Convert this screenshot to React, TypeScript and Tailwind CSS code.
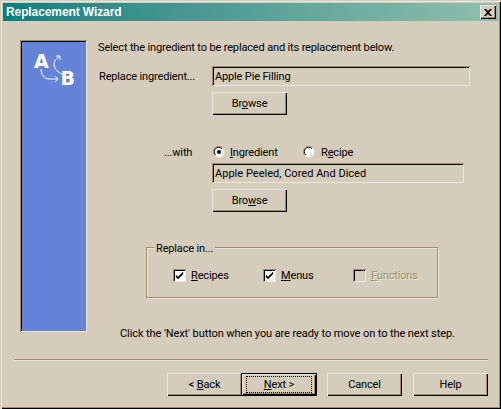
import React from "react";

const raised =
  "shadow-[inset_1px_1px_0_#eae6dd,inset_-1px_-1px_0_#000,inset_-2px_-2px_0_#a28d68]";
const sunken =
  "shadow-[inset_1px_1px_0_#a28d68,inset_-1px_-1px_0_#eae6dd,inset_2px_2px_0_#000]";

function Btn({ children, cls = "" }: { children: React.ReactNode; cls?: string }) {
  return (
    <div className={`w-[75px] h-[23px] flex items-center justify-center bg-[#d5ccbb] ${raised} ${cls}`}>
      <span>{children}</span>
    </div>
  );
}

function Field({ text, cls }: { text: string; cls: string }) {
  return (
    <div className={`h-5 flex items-center pl-[3px] pt-px ${sunken} ${cls}`}>{text}</div>
  );
}

function Radio({ on }: { on?: boolean }) {
  return (
    <svg width="12" height="12" viewBox="0 0 12 12" className="shrink-0">
      <circle cx="6" cy="6" r="5.5" fill="#fff" />
      <path d="M1.8 9.6A5.5 5.5 0 0 1 9.6 1.8" fill="none" stroke="#a28d68" strokeWidth="1" />
      <path d="M2.6 8.8A4.3 4.3 0 0 1 8.8 2.6" fill="none" stroke="#000" strokeWidth="1" />
      <path d="M10 2.6A5.5 5.5 0 0 1 2.6 10" fill="none" stroke="#eae6dd" strokeWidth="1" />
      {on && <circle cx="6" cy="6" r="2" fill="#000" />}
    </svg>
  );
}

function Check({ on, disabled }: { on?: boolean; disabled?: boolean }) {
  return (
    <div
      className={`w-[13px] h-[13px] shrink-0 ${
        disabled ? "bg-[#d5ccbb]" : "bg-white"
      } ${sunken}`}
    >
      {on && (
        <svg width="13" height="13" viewBox="0 0 13 13">
          <path d="M3 6v2l2 2 5-5V3L5 8z" fill="#000" stroke="#000" strokeWidth="0.4" />
        </svg>
      )}
    </div>
  );
}

function Sidebar() {
  return (
    <div className={`w-[67px] h-[292px] shrink-0 bg-[#6583d8] pl-2 pt-2 ${sunken}`}>
      <svg width="48" height="40" viewBox="0 0 48 40" className="block">
        <text
          x="6"
          y="20"
          fontFamily="'DejaVu Sans', sans-serif"
          fontWeight="700"
          fontSize="19"
          fill="#fff"
        >
          A
        </text>
        <text
          x="32.5"
          y="37"
          fontFamily="'DejaVu Sans', sans-serif"
          fontWeight="700"
          fontSize="19"
          fill="#fff"
        >
          B
        </text>
        <path d="M13 21c0 6 4 10 8 10h9" fill="none" stroke="#fff" strokeWidth="1" />
        <path d="M27 28l3 3-3 3" fill="none" stroke="#fff" strokeWidth="1" />
        <path d="M34 26c-8-3-12-12-2-18" fill="none" stroke="#fff" strokeWidth="1" />
        <path d="M28 8h4v4" fill="none" stroke="#fff" strokeWidth="1" />
      </svg>
    </div>
  );
}

export default function App() {
  return (
    <div
      className="w-[501px] h-[409px] bg-[#d5ccbb] p-[3px] text-[11px] leading-[14px] tracking-[-0.15px] text-black overflow-hidden shadow-[inset_1px_1px_0_#d5ccbb,inset_2px_2px_0_#eae6dd,inset_-1px_-1px_0_#000,inset_-2px_-2px_0_#a28d68]"
      style={{ fontFamily: "Roboto, Arial, sans-serif" }}
    >
      <div className="h-[18px] flex items-center justify-between pl-[3px] pr-[2px] bg-gradient-to-r from-[#008080] to-[#8dc0ae]">
        <span className="text-white font-bold text-[12px] tracking-[-0.1px] [font-family:'Liberation_Sans',sans-serif]">
          Replacement Wizard
        </span>
        <div className={`w-4 h-[14px] flex items-center justify-center bg-[#d5ccbb] ${raised}`}>
          <svg width="8" height="7" viewBox="0 0 8 7">
            <path d="M0 0l2 0 2 2 2-2 2 0-3 3.5 3 3.5-2 0-2-2-2 2-2 0 3-3.5z" fill="#000" />
          </svg>
        </div>
      </div>

      <div className="flex items-start pl-[17px] pt-[19px]">
        <Sidebar />
        <div className="ml-[11px] flex-1">
          <div className="h-[14px] pt-px">Select the ingredient to be replaced and its replacement below.</div>

          <div className="mt-3 flex items-center">
            <span className="w-[114px] pl-px pt-px">Replace ingredient...</span>
            <Field text="Apple Pie Filling" cls="w-[258px]" />
          </div>
          <div className="mt-[6px] ml-[114px]">
            <Btn>
              Br<u>o</u>wse
            </Btn>
          </div>

          <div className="mt-[30px] flex items-center h-[14px]">
            <span className="w-[114px] pl-[66px] pt-px">...with</span>
            <div className="w-[91px] flex items-center gap-[5px] pl-[1px]">
              <Radio on />
              <span className="pt-px">
                <u>I</u>ngredient
              </span>
            </div>
            <div className="flex items-center gap-[6px]">
              <Radio />
              <span className="pt-px">
                R<u>e</u>cipe
              </span>
            </div>
          </div>
          <Field text="Apple Peeled, Cored And Diced" cls="w-[252px] mt-[4px] ml-[114px] tracking-[0.02px]" />
          <div className="mt-[6px] ml-[114px]">
            <Btn>
              Bro<u>w</u>se
            </Btn>
          </div>

          <div className="relative mt-[35px] ml-[48px] w-[292px] h-[51px] border border-[#a28d68] pl-[26px] pt-[20px] shadow-[1px_1px_0_#eae6dd,inset_1px_1px_0_#eae6dd]">
            <span className="absolute left-[7px] top-[-6px] px-[2px] bg-[#d5ccbb]">Replace in...</span>
            <div className="flex items-center">
              <div className="w-[90px] flex items-center gap-[5px]">
                <Check on />
                <span className="pt-px">
                  <u>R</u>ecipes
                </span>
              </div>
              <div className="w-[90px] flex items-center gap-[5px]">
                <Check on />
                <span className="pt-px">
                  <u>M</u>enus
                </span>
              </div>
              <div className="flex items-center gap-[5px]">
                <Check disabled />
                <span className="pt-px text-[#a28d68] [text-shadow:1px_1px_0_#eae6dd]">
                  <u>F</u>unctions
                </span>
              </div>
            </div>
          </div>

          <div className="mt-[28px] ml-[22px] h-[14px] pt-px tracking-[-0.09px]">
            Click the 'Next' button when you are ready to move on to the next step.
          </div>
        </div>
      </div>

      <div className="mt-[19px] ml-[11px] w-[474px] h-[2px] border-t border-b border-t-[#a28d68] border-b-[#eae6dd]" />

      <div className="mt-3 ml-[164px] flex items-center">
        <Btn>
          &lt; <u>B</u>ack
        </Btn>
        <div className="w-[76px] h-[23px] border border-black ml-[-1px] bg-[#d5ccbb]">
          <div className={`h-full flex items-center justify-center ${raised}`}>
            <span className="outline-1 outline-dotted outline-black w-[64px] h-[15px] flex items-center justify-center">
              <span>
                <u>N</u>ext &gt;
              </span>
            </span>
          </div>
        </div>
        <div className="ml-[10px]">
          <Btn>Cancel</Btn>
        </div>
        <div className="ml-[11px]">
          <Btn>Help</Btn>
        </div>
      </div>
    </div>
  );
}
